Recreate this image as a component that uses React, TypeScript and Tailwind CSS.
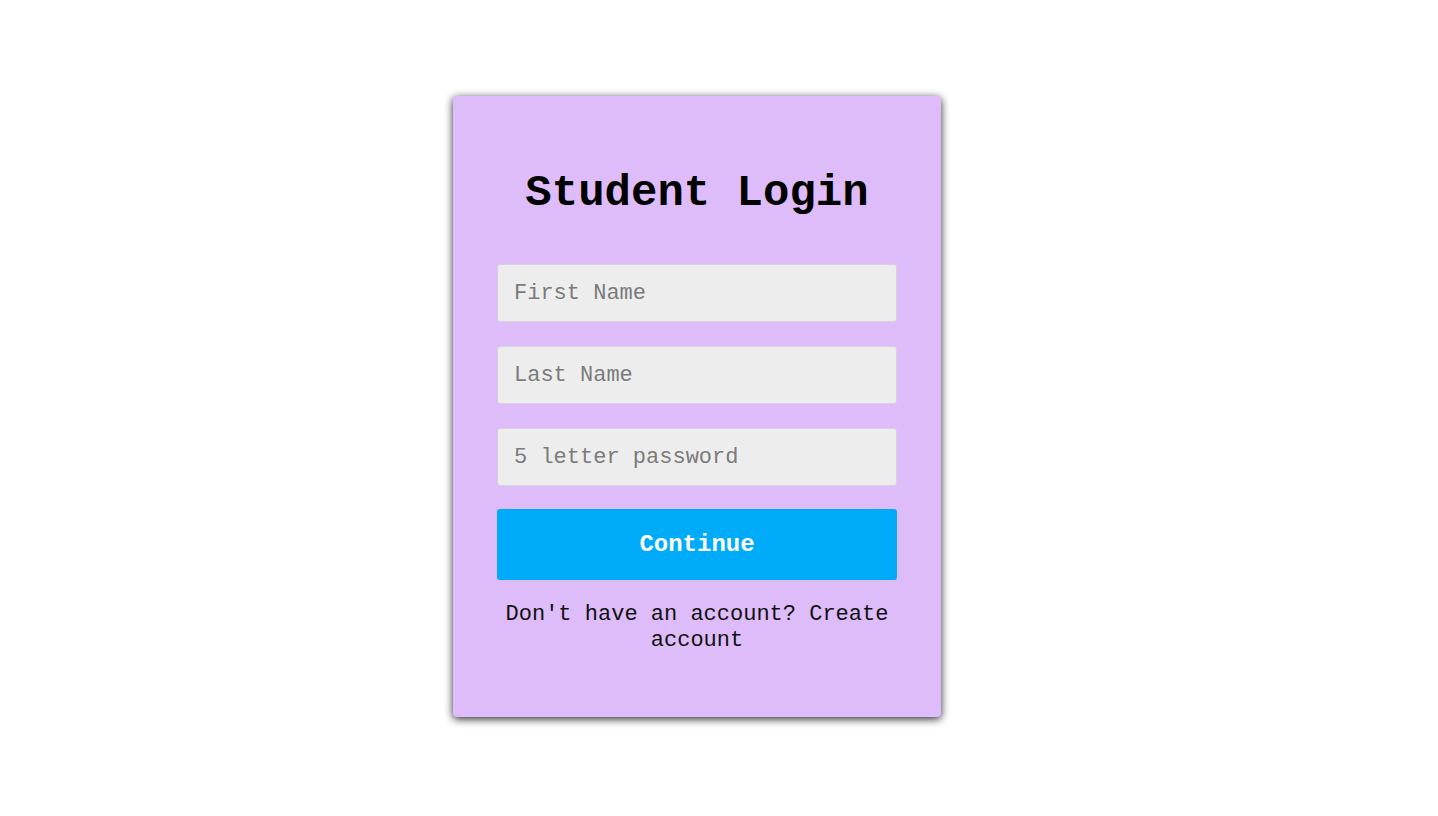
const LoginCard = () => {
  const fields = ["First Name", "Last Name", "5 letter password"];

  return (
    <div className="w-[488px] rounded-[4px] bg-[#ddbcf9] px-[44px] pt-[72px] pb-[63px] shadow-[0_2px_9px_rgba(0,0,0,0.85)]">
      <h1 className="text-center text-[44px] leading-[50px] font-bold text-black">
        Student Login
      </h1>
      <form className="mt-[46px] flex flex-col" onSubmit={(e) => e.preventDefault()}>
        <div className="flex flex-col gap-[24px]">
          {fields.map((field) => (
            <input
              key={field}
              type="text"
              placeholder={field}
              className="h-[58px] w-full rounded-[3px] border border-[#d6d2da] bg-[#ededed] px-[16px] text-[22px] text-black outline-none placeholder:text-[#7b7b7b]"
            />
          ))}
        </div>
        <button
          type="submit"
          className="mt-[23px] h-[71px] w-full rounded-[3px] bg-[#00acf9] text-[24px] font-bold text-white"
        >
          Continue
        </button>
      </form>
      <p className="mt-[22px] text-center text-[22px] leading-[26px] text-[#111]">
        Don't have an account? Create account
      </p>
    </div>
  );
};

export default function App() {
  return (
    <div className="flex min-h-[816px] items-start justify-center bg-white pt-[96px] pr-[44px] font-['Liberation_Mono','Courier_New',monospace]">
      <LoginCard />
    </div>
  );
}
